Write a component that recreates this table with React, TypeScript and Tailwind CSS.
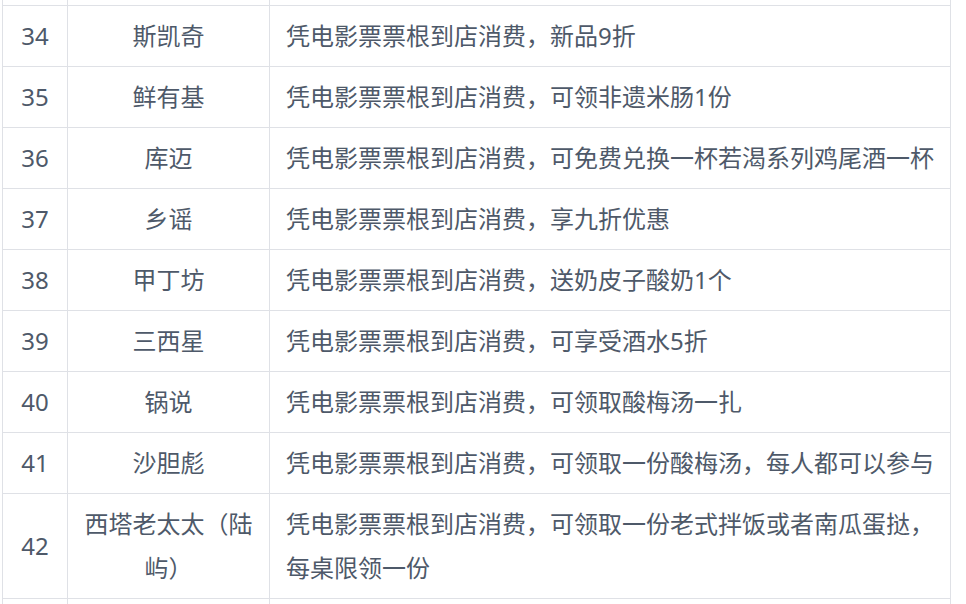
const rows = [
  { no: "34", name: "斯凯奇", desc: "凭电影票票根到店消费，新品9折" },
  { no: "35", name: "鲜有基", desc: "凭电影票票根到店消费，可领非遗米肠1份" },
  { no: "36", name: "库迈", desc: "凭电影票票根到店消费，可免费兑换一杯若渴系列鸡尾酒一杯" },
  { no: "37", name: "乡谣", desc: "凭电影票票根到店消费，享九折优惠" },
  { no: "38", name: "甲丁坊", desc: "凭电影票票根到店消费，送奶皮子酸奶1个" },
  { no: "39", name: "三西星", desc: "凭电影票票根到店消费，可享受酒水5折" },
  { no: "40", name: "锅说", desc: "凭电影票票根到店消费，可领取酸梅汤一扎" },
  { no: "41", name: "沙胆彪", desc: "凭电影票票根到店消费，可领取一份酸梅汤，每人都可以参与" },
  { no: "42", name: "西塔老太太（陆屿）", desc: "凭电影票票根到店消费，可领取一份老式拌饭或者南瓜蛋挞，每桌限领一份" },
];

function EdgeRow({ bottom }: { bottom?: boolean }) {
  return (
    <div className={"flex " + (bottom ? "h-[10px]" : "h-[6px] border-b border-[#dfe1e6]")}>
      <div className="w-[65px] shrink-0 border-l border-[#dfe1e6]" />
      <div className="w-[202px] shrink-0 border-l border-[#dfe1e6]" />
      <div className="w-[682px] shrink-0 border-x border-[#dfe1e6]" />
    </div>
  );
}

export default function App() {
  return (
    <div className="h-[604px] overflow-hidden bg-white pl-[2px] font-['Noto_Sans','Noto_Sans_CJK_SC',sans-serif] text-[24px] leading-[44px] text-[#4e5969]">
      <div className="w-[949px]">
        <EdgeRow />
        {rows.map((r) => (
          <div key={r.no} className="flex border-b border-[#dfe1e6]">
            <div className="w-[65px] shrink-0 border-l border-[#dfe1e6] py-2 flex items-center justify-center">
              {r.no}
            </div>
            <div className="w-[202px] shrink-0 border-l border-[#dfe1e6] px-4 py-2 flex items-center justify-center text-center">
              <span>{r.name}</span>
            </div>
            <div className="w-[682px] shrink-0 border-x border-[#dfe1e6] px-4 py-2 flex items-center">
              <span>{r.desc}</span>
            </div>
          </div>
        ))}
        <EdgeRow bottom />
      </div>
    </div>
  );
}
